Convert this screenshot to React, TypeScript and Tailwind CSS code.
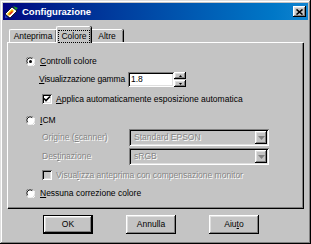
import React from 'react'

const raised = 'shadow-[inset_-1px_-1px_0_#000,inset_1px_1px_0_#fff,inset_-2px_-2px_0_#808080,inset_2px_2px_0_#dfdfdf]'
const sunken = 'shadow-[inset_1px_1px_0_#808080,inset_-1px_-1px_0_#fff,inset_2px_2px_0_#000,inset_-2px_-2px_0_#dfdfdf]'
const disabledText = 'text-[#868686] [text-shadow:1px_1px_0_#fff]'

const Radio = ({ checked }: { checked?: boolean }) => (
    <svg width="9" height="9" viewBox="0 0 12 12" className="shrink-0">
        <circle cx="6" cy="6" r="5.5" fill="#fff" />
        <path d="M1.2 9.2 A5.5 5.5 0 0 1 9.2 1.2" stroke="#808080" strokeWidth="1.2" fill="none" />
        <path d="M2.2 8.4 A4.4 4.4 0 0 1 8.4 2.2" stroke="#000" strokeWidth="1.2" fill="none" />
        <path d="M10.8 2.8 A5.5 5.5 0 0 1 2.8 10.8" stroke="#fff" strokeWidth="1.2" fill="none" />
        {checked && <circle cx="6" cy="6" r="2" fill="#000" />}
    </svg>
)

const Check = ({ checked, disabled }: { checked?: boolean; disabled?: boolean }) => (
    <div className={'w-[10px] h-[10px] shrink-0 flex items-center justify-center ' + sunken + (disabled ? ' bg-[#c8c8c8]' : ' bg-white')}>
        {checked && (
            <svg width="8" height="8" viewBox="0 0 8 8">
                <path d="M1 3.5 L3 5.5 L7 1.5" stroke="#000" strokeWidth="1.6" fill="none" />
            </svg>
        )}
    </div>
)

const Combo = ({ value }: { value: string }) => (
    <div className={'w-[140px] h-[17px] bg-[#c4c4c4] flex items-center pl-[5px] pr-[2px] ' + sunken}>
        <span className={disabledText}>{value}</span>
        <div className={'ml-auto w-[12px] h-[13px] bg-[#c4c4c4] flex items-center justify-center ' + raised}>
            <svg width="7" height="4" viewBox="0 0 7 4">
                <path d="M0 0 H7 L3.5 4 Z" fill="#808080" />
            </svg>
        </div>
    </div>
)

const App = () => {
    return (
        <div className="w-[311px] h-[244px] bg-[#c4c4c4] p-[3px] font-['Liberation_Sans',Arial,sans-serif] text-[8.5px] leading-none text-black whitespace-nowrap shadow-[inset_-1px_-1px_0_#000,inset_1px_1px_0_#dfdfdf,inset_-2px_-2px_0_#808080,inset_2px_2px_0_#fff] select-none">
            <div className="h-[17px] flex items-center bg-gradient-to-r from-[#000080] to-[#1084d0] pl-[1px] pr-[2px]">
                <svg width="15" height="14" viewBox="0 0 15 14" className="shrink-0">
                    <path d="M1 9 L8 2 L13 6 L6 13 Z" fill="#fff" stroke="#000" strokeWidth="0.8" />
                    <path d="M3 9 L8 4 L10 6 L5 11 Z" fill="#f0c000" />
                    <path d="M5 9 L8 6 L9 7 L6 10 Z" fill="#e02020" />
                    <path d="M9 1 L14 3 L12 5 Z" fill="#20a020" />
                    <path d="M1 10 L4 13 L1 13 Z" fill="#2040c0" />
                </svg>
                <span className="ml-[3px] text-white font-bold text-[9.5px]">Configurazione</span>
                <div className={'ml-auto w-[13px] h-[11px] bg-[#c4c4c4] flex items-center justify-center ' + raised}>
                    <svg width="7" height="6" viewBox="0 0 7 6">
                        <path d="M0.5 0.5 L6.5 5.5 M6.5 0.5 L0.5 5.5" stroke="#000" strokeWidth="1.6" />
                    </svg>
                </div>
            </div>

            <div className="mt-[6px] ml-[4px]">
                <div className="flex items-end h-[16px] pl-[2px]">
                    <div className="w-[47px] h-[13px] border-l border-t border-white rounded-tl-[2px] shadow-[inset_-1px_0_0_#808080,1px_0_0_#000] flex items-center justify-center">
                        Anteprima
                    </div>
                    <div className="relative z-10 w-[35px] h-[17px] -mb-[1px] border-l border-t border-white rounded-t-[2px] bg-[#c4c4c4] shadow-[inset_-1px_0_0_#808080,1px_0_0_#000] flex items-start justify-center pt-[3px]">
                        <span className="px-[2px] py-[1px] border border-dotted border-black">Colore</span>
                    </div>
                    <div className="w-[32px] h-[13px] border-t border-white rounded-tr-[2px] shadow-[inset_-1px_0_0_#808080,1px_0_0_#000] flex items-center justify-center">
                        Altre
                    </div>
                </div>

                <div className="w-[296px] h-[166px] border-l border-t border-white shadow-[inset_-1px_-1px_0_#808080,1px_1px_0_#000] pt-[11px]">
                    <div className="flex items-center h-[14px] pl-[18px] gap-[5px]">
                        <Radio checked />
                        <span><u>C</u>ontrolli colore</span>
                    </div>

                    <div className="grid grid-cols-[89px_46px_12px] items-center h-[15px] mt-[4px] ml-[31px]">
                        <div className="tracking-[-0.15px]"><u>V</u>isualizzazione gamma</div>
                        <div className={'h-[15px] bg-white flex items-center pl-[3px] ' + sunken}>1.8</div>
                        <div className="flex flex-col gap-[1px]">
                            <div className={'h-[7px] bg-[#c4c4c4] flex items-center justify-center ' + raised}>
                                <svg width="3" height="2" viewBox="0 0 3 2"><path d="M0 2 H3 L1.5 0 Z" fill="#000" /></svg>
                            </div>
                            <div className={'h-[7px] bg-[#c4c4c4] flex items-center justify-center ' + raised}>
                                <svg width="3" height="2" viewBox="0 0 3 2"><path d="M0 0 H3 L1.5 2 Z" fill="#000" /></svg>
                            </div>
                        </div>
                    </div>

                    <div className="flex items-center h-[12px] mt-[6px] pl-[34px] gap-[4px]">
                        <Check checked />
                        <span><u>A</u>pplica automaticamente esposizione automatica</span>
                    </div>

                    <div className="flex items-center h-[14px] mt-[8px] pl-[18px] gap-[5px]">
                        <Radio />
                        <span><u>I</u>CM</span>
                    </div>

                    <div className="grid grid-cols-[87px_140px] items-center gap-y-[2px] mt-[2px] ml-[34px]">
                        <div className={disabledText}>Origine (<u>s</u>canner)</div>
                        <Combo value="Standard EPSON" />
                        <div className={disabledText}>Des<u>t</u>inazione</div>
                        <Combo value="sRGB" />
                    </div>

                    <div className="flex items-center h-[12px] mt-[4px] pl-[34px] gap-[4px]">
                        <Check disabled />
                        <span className={disabledText}>Visua<u>l</u>izza anteprima con compensazione monitor</span>
                    </div>

                    <div className="flex items-center h-[14px] mt-[5px] pl-[18px] gap-[5px]">
                        <Radio />
                        <span><u>N</u>essuna correzione colore</span>
                    </div>
                </div>

                <div className="flex mt-[7px] pl-[36px] gap-[33px]">
                    <button className={'w-[50px] h-[19px] bg-[#c4c4c4] border border-black flex items-center justify-center ' + raised}>OK</button>
                    <button className={'w-[50px] h-[19px] bg-[#c4c4c4] flex items-center justify-center ' + raised}>Annulla</button>
                    <button className={'w-[50px] h-[19px] bg-[#c4c4c4] flex items-center justify-center ' + raised}>Aiu<u>t</u>o</button>
                </div>
            </div>
        </div>
    )
}

export default App
